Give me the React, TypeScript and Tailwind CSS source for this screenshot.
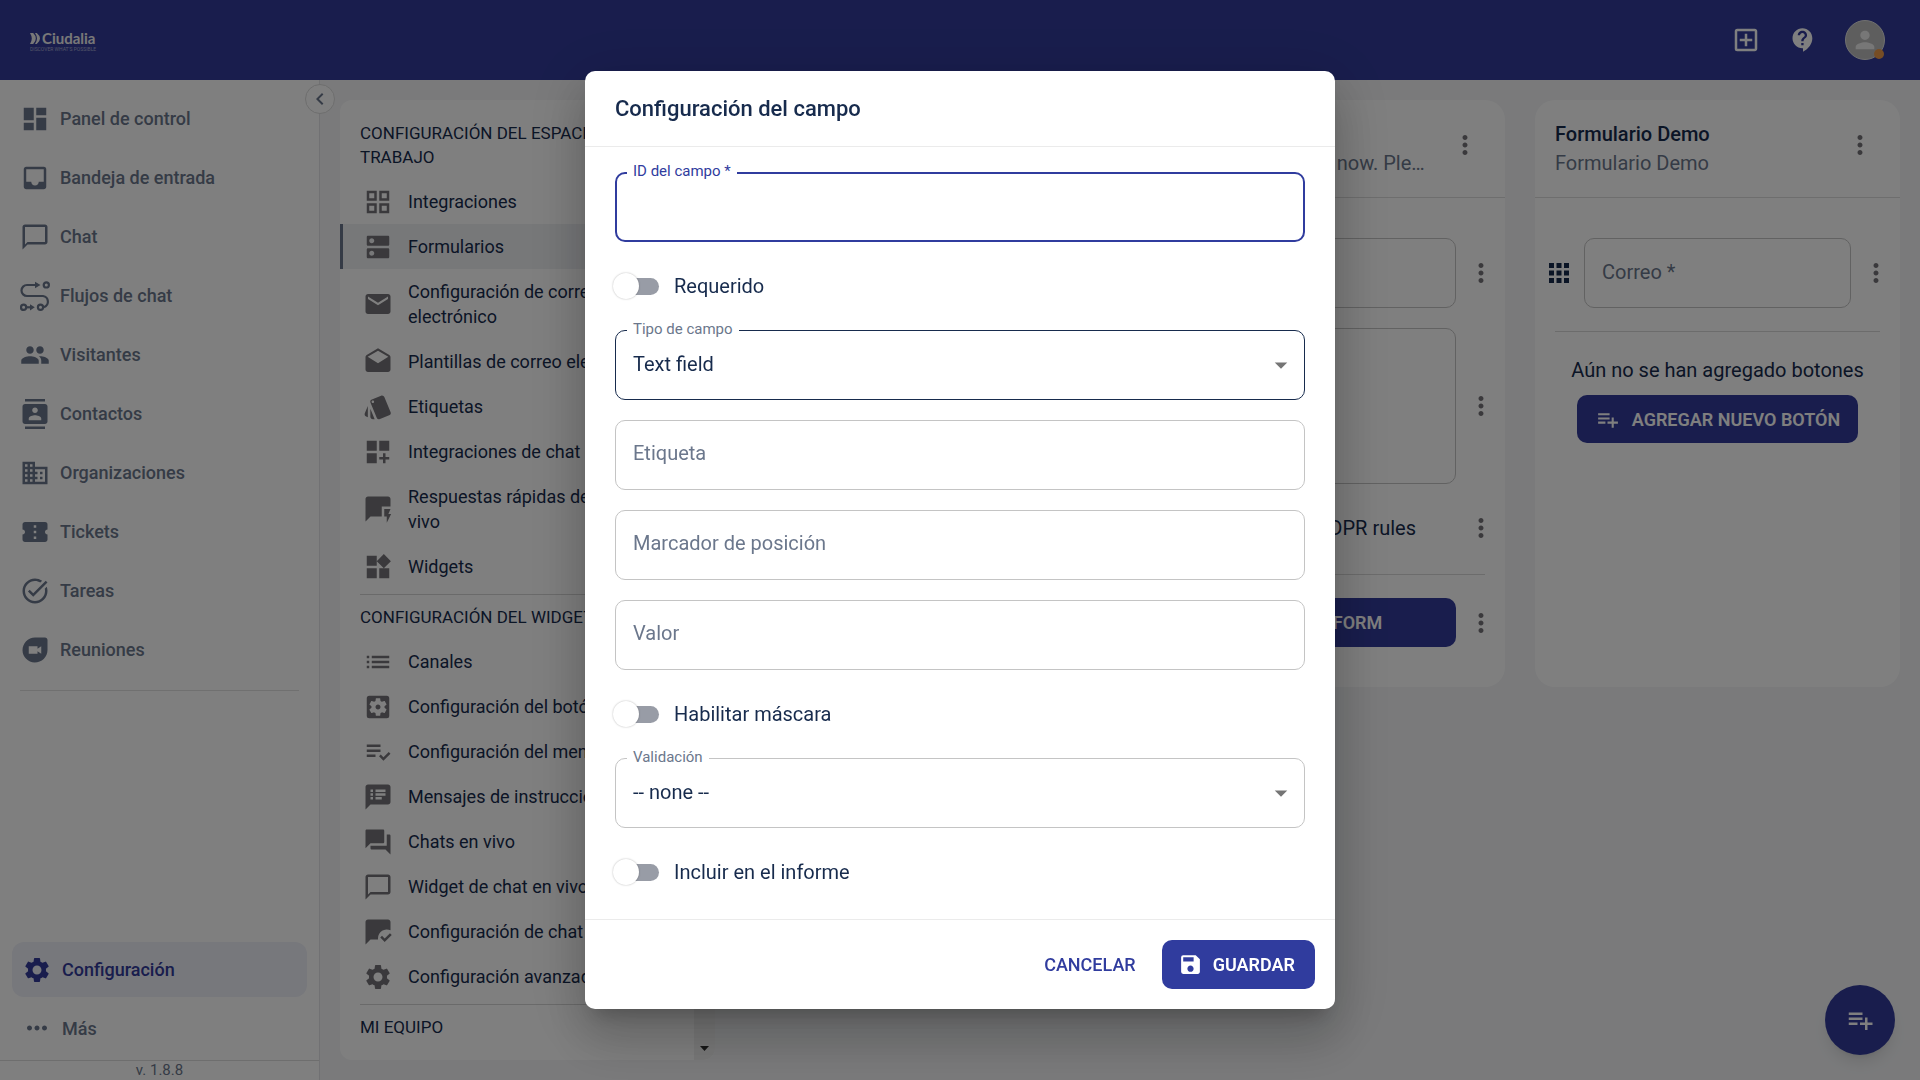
import React from 'react';
import type { IconType } from 'react-icons';
import {
  MdApps, MdBusiness, MdChatBubbleOutline, MdChevronLeft, MdConfirmationNumber, MdContacts,
  MdContactSupport, MdDashboard, MdDashboardCustomize, MdDns, MdDrafts, MdDuo, MdEmail, MdForum,
  MdGridView, MdInbox, MdList, MdMarkChatRead, MdMoreHoriz, MdMoreVert, MdOutlineAddBox, MdPeople,
  MdPerson, MdPlaylistAdd, MdPlaylistAddCheck, MdQuickreply, MdSave, MdSettings,
  MdSettingsApplications, MdSpeakerNotes, MdStyle, MdTaskAlt, MdWidgets, MdArrowDropDown,
} from 'react-icons/md';

const FlowIcon = ({ size = 30 }: { size?: number }) => (
  <svg width={size} height={size} viewBox="0 0 30 30" fill="none" stroke="currentColor" strokeWidth="2.2">
    <path d="M16 4H7a5.5 5.5 0 0 0 0 11H23a5.8 5.8 0 0 1 1 11.2" />
    <circle cx="26.3" cy="3.9" r="2.6" />
    <circle cx="3.6" cy="26.3" r="2.6" />
    <circle cx="20.5" cy="26.3" r="2.6" />
    <path d="M6 26.3h5" />
    <path d="M15 .8 20.5 4 15 7.2zM10 23.2l4.8 3.1-4.8 3.1z" fill="currentColor" stroke="none" />
  </svg>
);

const NAV: { label: string; icon: IconType | typeof FlowIcon }[] = [
  { label: 'Panel de control', icon: MdDashboard },
  { label: 'Bandeja de entrada', icon: MdInbox },
  { label: 'Chat', icon: MdChatBubbleOutline },
  { label: 'Flujos de chat', icon: FlowIcon },
  { label: 'Visitantes', icon: MdPeople },
  { label: 'Contactos', icon: MdContacts },
  { label: 'Organizaciones', icon: MdBusiness },
  { label: 'Tickets', icon: MdConfirmationNumber },
  { label: 'Tareas', icon: MdTaskAlt },
  { label: 'Reuniones', icon: MdDuo },
];

const WORKSPACE: { label: string; icon: IconType; active?: boolean }[] = [
  { label: 'Integraciones', icon: MdGridView },
  { label: 'Formularios', icon: MdDns, active: true },
  { label: 'Configuración de correo electrónico', icon: MdEmail },
  { label: 'Plantillas de correo electrónico', icon: MdDrafts },
  { label: 'Etiquetas', icon: MdStyle },
  { label: 'Integraciones de chat en vivo', icon: MdDashboardCustomize },
  { label: 'Respuestas rápidas de chat en vivo', icon: MdQuickreply },
  { label: 'Widgets', icon: MdWidgets },
];

const WIDGET: { label: string; icon: IconType; active?: boolean }[] = [
  { label: 'Canales', icon: MdList },
  { label: 'Configuración del botón', icon: MdSettingsApplications },
  { label: 'Configuración del menú', icon: MdPlaylistAddCheck },
  { label: 'Mensajes de instrucciones', icon: MdSpeakerNotes },
  { label: 'Chats en vivo', icon: MdForum },
  { label: 'Widget de chat en vivo', icon: MdChatBubbleOutline },
  { label: 'Configuración de chat', icon: MdMarkChatRead },
  { label: 'Configuración avanzada', icon: MdSettings },
];

const Header = () => (
  <header className="h-20 shrink-0 bg-[#323b9b] flex items-center justify-between pl-[30px] pr-[35px] text-white">
    <a href="#" className="block pt-1 text-[#f0f0f0]">
      <span className="flex items-center gap-[2px] h-3">
        <svg width="10" height="11" viewBox="0 0 10 11" fill="currentColor">
          <path d="M0 0h3.200Q5.800 2.400 5.800 5.500T3.200 11H0Q1.800 8 1.800 5.500T0 0zM5 0h1.800Q10 2.600 10 5.500T6.800 11H5Q7 8 7 5.500T5 0z" />
        </svg>
        <span className="font-['Lato'] font-bold text-[15px] leading-3">Ciudalia</span>
      </span>
      <span className="block text-[5px] leading-[6px] mt-[2px] whitespace-nowrap text-[#a8abd0]">DISCOVER WHAT'S POSSIBLE</span>
    </a>
    <div className="flex items-center gap-7">
      <button aria-label="Añadir"><MdOutlineAddBox size={30} /></button>
      <button aria-label="Ayuda"><MdContactSupport size={28} /></button>
      <button aria-label="Cuenta" className="relative size-10 rounded-full bg-[#bdbdbd] border border-[#e0e0e0] text-[#eeeeee] flex items-center justify-center">
        <MdPerson size={28} />
        <span className="absolute right-0 bottom-0 size-[10px] rounded-full bg-[#ed9b4a]" />
      </button>
    </div>
  </header>
);

const Sidebar = () => (
  <aside className="relative w-80 shrink-0 bg-white border-r border-[#e2e3e6] flex flex-col text-[#6b778c] font-medium text-[18px]">
    <button aria-label="Contraer" className="absolute -right-4 top-1 size-[30px] rounded-full bg-white border border-[#dcdcdc] text-[#6b778c] flex items-center justify-center">
      <MdChevronLeft size={24} />
    </button>
    <nav className="mx-5 pt-[9px] pb-[11px] border-b border-[#e0e0e0]">
      {NAV.map(({ label, icon: Icon }) => (
        <a key={label} href="#" className="h-[59px] flex items-center gap-[10px]">
          <Icon size={30} />
          {label}
        </a>
      ))}
    </nav>
    <div className="mt-auto px-3 pb-[1px]">
      <a href="#" className="h-[55px] rounded-xl bg-[#eff0f8] text-[#323b9b] flex items-center gap-[10px] px-[10px]">
        <MdSettings size={30} />
        Configuración
      </a>
      <a href="#" className="h-[62px] flex items-center gap-[10px] px-[10px]">
        <MdMoreHoriz size={30} />
        Más
      </a>
    </div>
    <div className="h-5 border-t border-[#dcdcdc] text-center text-[15px] leading-[18px] font-normal">v. 1.8.8</div>
  </aside>
);

const SettingsHeading = ({ children }: { children: React.ReactNode }) => (
  <h2 className="mx-5 py-[10px] text-[17px] leading-6 uppercase">{children}</h2>
);

const SettingsList = ({ items }: { items: typeof WORKSPACE }) => (
  <ul>
    {items.map(({ label, icon: Icon, active }) => (
      <li key={label}>
        <a
          href="#"
          className={`flex items-center gap-[15px] py-[10px] pr-4 pl-5 text-[18px] leading-[25px] border-l-[3px] ${
            active ? 'bg-[#eef0f3] border-[#6b778c]' : 'border-transparent'
          }`}
        >
          <Icon size={30} className="-my-1 shrink-0 text-[#757378]" />
          {label}
        </a>
      </li>
    ))}
  </ul>
);

const SettingsPanel = () => (
  <section className="w-[375px] shrink-0 flex rounded-xl overflow-hidden bg-white text-[#172b4d]">
    <div className="flex-1 overflow-hidden pt-[11px]">
      <SettingsHeading>Configuración del espacio de trabajo</SettingsHeading>
      <SettingsList items={WORKSPACE} />
      <hr className="ml-5 mt-[5px] border-[#d5d5d5]" />
      <SettingsHeading>Configuración del widget</SettingsHeading>
      <SettingsList items={WIDGET} />
      <hr className="ml-5 mt-[5px] border-[#d5d5d5]" />
      <SettingsHeading>Mi equipo</SettingsHeading>
    </div>
    <div className="w-[21px] bg-[#f1f1f1] flex flex-col justify-end items-center pb-[9px]">
      <svg width="9" height="5" viewBox="0 0 9 5"><path d="M0 0h9L4.500 5z" fill="#303030" /></svg>
    </div>
  </section>
);

const Kebab = () => (
  <button aria-label="Opciones" className="size-[30px] shrink-0 flex items-center justify-center text-[#757378]">
    <MdMoreVert size={30} />
  </button>
);

const CardHeader = ({ title, subtitle }: { title: string; subtitle: string }) => (
  <div className="h-[98px] pl-5 pr-[25px] pb-2 flex items-center gap-5 border-b border-[#dcdcdc]">
    <div className="flex-1 min-w-0 pt-2">
      <h3 className="font-medium text-[20px] leading-[29px]">{title}</h3>
      <p className="text-[20px] leading-[29px] text-[#6b778c] truncate">{subtitle}</p>
    </div>
    <Kebab />
  </div>
);

const Row = ({ children }: { children: React.ReactNode }) => (
  <div className="flex items-center gap-[10px] pl-1 pr-[9px]">
    <MdApps size={30} className="shrink-0" />
    <div className="flex-1 min-w-0">{children}</div>
    <Kebab />
  </div>
);

const FormCards = () => (
  <div className="flex-1 grid grid-cols-3 gap-[30px] items-start text-[#172b4d]">
    <article className="col-start-2 h-[587px] rounded-[20px] bg-white">
      <CardHeader title="Contacto" subtitle="We're not here right now. Please leave a message" />
      <div className="pt-10 flex flex-col gap-5 pl-[5px]">
        <Row><input aria-label="Nombre" className="block w-full h-[70px] rounded-[10px] border border-[#c4c4c4]" /></Row>
        <Row><textarea aria-label="Mensaje" className="block w-full h-[156px] rounded-[10px] border border-[#c4c4c4] resize-none" /></Row>
        <Row><p className="h-12 text-[20px] leading-[48px] text-right pr-10 whitespace-nowrap">I agree with GDPR rules</p></Row>
      </div>
      <hr className="mx-5 mt-[22px] mb-[23px] border-[#d8d8d8]" />
      <div className="pl-[5px]">
        <Row>
          <button className="w-full h-[49px] rounded-[10px] bg-[#323b9b] text-white text-[18px] font-semibold">SUBMIT FORM</button>
        </Row>
      </div>
    </article>

    <article className="h-[587px] rounded-[20px] bg-white">
      <CardHeader title="Formulario Demo" subtitle="Formulario Demo" />
      <div className="pt-10 pl-[5px]">
        <Row>
          <div className="h-[70px] rounded-[10px] border border-[#c4c4c4] px-[17px] pb-[2px] flex items-center">
            <input aria-label="Correo" placeholder="Correo *" className="w-full outline-none text-[20px] placeholder:text-[#6b778c]" />
          </div>
        </Row>
      </div>
      <hr className="mx-5 mt-[23px] mb-[23px] border-[#d8d8d8]" />
      <p className="text-center text-[20px] leading-[30px]">Aún no se han agregado botones</p>
      <button className="mt-[10px] mx-auto h-12 px-[18px] rounded-[10px] bg-[#323b9b] text-white text-[18px] font-semibold flex items-center gap-3 whitespace-nowrap">
        <MdPlaylistAdd size={25} />
        AGREGAR NUEVO BOTÓN
      </button>
    </article>
  </div>
);

const TextField = ({ id, label }: { id: string; label: string }) => (
  <div className="relative">
    <label htmlFor={id} className="absolute left-[18px] top-[18px] text-[20px] leading-[30px] text-[#6b778c]">{label}</label>
    <input id={id} className="block w-full h-[70px] px-[17px] rounded-[10px] border border-[#c4c4c4] text-[20px] outline-none" />
  </div>
);

const SelectField = ({ id, label, value, active }: { id: string; label: string; value: string; active?: boolean }) => (
  <div className="relative">
    <label htmlFor={id} className="absolute left-3 -top-[11px] px-[6px] bg-white text-[15px] leading-5 text-[#6b778c]">{label}</label>
    <select
      id={id}
      className={`block w-full h-[70px] px-[17px] pb-[2px] rounded-[10px] border text-[20px] appearance-none outline-none ${
        active ? 'border-[#172b4d]' : 'border-[#c4c4c4]'
      }`}
    >
      <option>{value}</option>
    </select>
    <MdArrowDropDown size={30} className="absolute right-[9px] top-5 text-[#757575] pointer-events-none" />
  </div>
);

const Switch = ({ label }: { label: string }) => (
  <div className="h-[88px] flex items-center">
    <label className="flex items-center gap-[15px] text-[20px]">
      <input
        type="checkbox"
        className="appearance-none w-[43px] h-[17px] ml-[1px] rounded-full bg-[#989ca6] flex items-center before:block before:shrink-0 before:size-[26px] before:-ml-[3px] before:rounded-full before:bg-white before:shadow-[0_0_2px_rgba(0,0,0,0.3)]"
      />
      {label}
    </label>
  </div>
);

const FieldDialog = () => (
  <div className="fixed inset-0 bg-black/50 flex items-center justify-center">
    <div
      role="dialog"
      aria-labelledby="dialog-title"
      className="w-[750px] rounded-[10px] bg-white text-[#172b4d] shadow-[0_14px_19px_-9px_rgba(0,0,0,0.2),0_30px_48px_4px_rgba(0,0,0,0.14),0_11px_58px_10px_rgba(0,0,0,0.12)]"
    >
      <h2 id="dialog-title" className="h-[76px] px-[30px] flex items-center border-b border-[#ebebeb] text-[22px] font-medium">
        Configuración del campo
      </h2>
      <div className="px-[30px] pt-[25px] pb-[3px]">
        <div className="relative">
          <label htmlFor="field-id" className="absolute left-3 -top-[11px] px-[6px] bg-white text-[15px] leading-5 text-[#303c9e]">ID del campo *</label>
          <input id="field-id" className="block w-full h-[70px] px-4 rounded-[10px] border-2 border-[#303c9e] text-[20px] outline-none" />
        </div>
        <Switch label="Requerido" />
        <div className="flex flex-col gap-5">
          <SelectField id="field-type" label="Tipo de campo" value="Text field" active />
          <TextField id="field-label" label="Etiqueta" />
          <TextField id="field-placeholder" label="Marcador de posición" />
          <TextField id="field-value" label="Valor" />
        </div>
        <Switch label="Habilitar máscara" />
        <SelectField id="field-validation" label="Validación" value="-- none --" />
        <Switch label="Incluir en el informe" />
      </div>
      <div className="border-t border-[#ebebeb] p-5 flex justify-end items-center gap-[10px]">
        <button className="h-[49px] px-4 text-[18px] font-medium text-[#303c9e]">CANCELAR</button>
        <button className="h-[49px] pl-4 pr-5 rounded-[10px] bg-[#303c9e] text-white text-[18px] font-semibold flex items-center gap-[10px]">
          <MdSave size={25} />
          GUARDAR
        </button>
      </div>
    </div>
  </div>
);

const App: React.FC = () => {
  return (
    <div className="h-screen flex flex-col overflow-hidden bg-[#f4f5f7] font-['Roboto',sans-serif]">
      <Header />
      <div className="flex-1 min-h-0 flex">
        <Sidebar />
        <main className="flex-1 min-w-0 p-5 flex gap-[30px]">
          <SettingsPanel />
          <FormCards />
        </main>
      </div>

      {/* Floating action */}
      <button aria-label="Agregar formulario" className="fixed right-[25px] bottom-[25px] size-[70px] rounded-full bg-[#323b9b] text-white flex items-center justify-center shadow-lg">
        <MdPlaylistAdd size={30} />
      </button>

      <FieldDialog />
    </div>
  );
};

export default App;
